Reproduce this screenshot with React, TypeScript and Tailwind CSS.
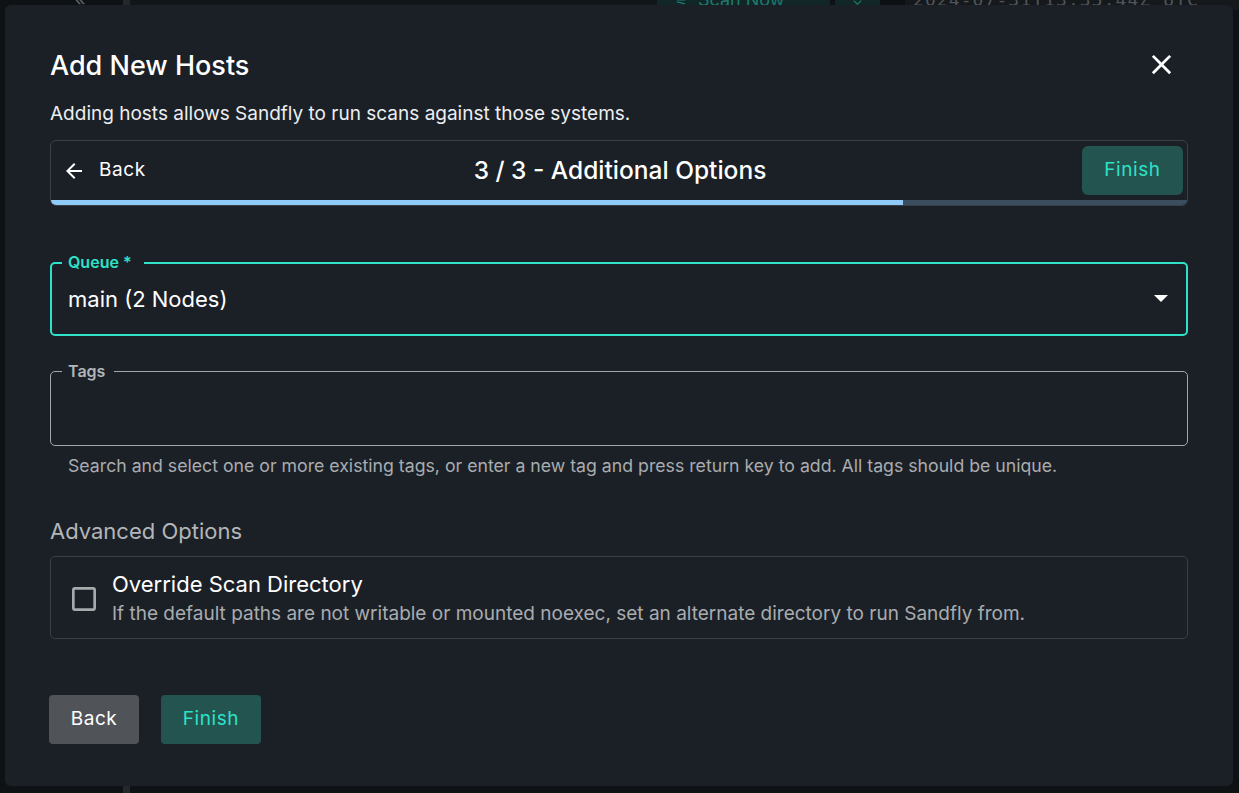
import React from "react";

const font = { fontFamily: "Inter, 'Noto Sans', sans-serif" };

function ArrowBack() {
  return (
    <svg width="24" height="24" viewBox="0 0 24 24" fill="#ffffff">
      <path d="M20 11H7.83l5.59-5.59L12 4l-8 8 8 8 1.41-1.41L7.83 13H20v-2z" />
    </svg>
  );
}

function CloseIcon() {
  return (
    <svg width="33" height="33" viewBox="0 0 24 24" fill="#ffffff">
      <path d="M19 6.41 17.59 5 12 10.59 6.41 5 5 6.41 10.59 12 5 17.59 6.41 19 12 13.41 17.59 19 19 17.59 13.41 12z" />
    </svg>
  );
}

function CheckboxBlank() {
  return (
    <svg width="32" height="32" viewBox="0 0 24 24" fill="#a7aaad">
      <path d="M19 5v14H5V5h14m0-2H5c-1.11 0-2 .9-2 2v14c0 1.1.89 2 2 2h14c1.1 0 2-.9 2-2V5c0-1.1-.9-2-2-2z" />
    </svg>
  );
}

export default function App() {
  return (
    <div style={font} className="relative w-full h-[793px] overflow-hidden bg-[#0e1215]">
      {/* Background application (dimmed) */}
      <div className="absolute inset-0">
        <div className="flex h-[22px] -mt-[12px] items-center">
          <div className="w-[123px] h-full flex items-center pl-[74px] text-[#5b6064] text-[20px]">«</div>
          <div className="w-[7px] h-full bg-[#24282c]" />
          <div className="w-[527px] h-full bg-[#111619]" />
          <div className="w-[173px] h-full bg-[#112627] flex items-center gap-[10px] pl-[18px] text-[#1f7a6d] text-[18px]">
            <span className="text-[14px]">⚟</span>
            <span>Scan Now</span>
          </div>
          <div className="w-[5px] h-full bg-[#0e1215]" />
          <div className="w-[45px] h-full bg-[#112627] flex items-center justify-center text-[#1f7a6d] text-[14px]">⌄</div>
          <div className="w-[25px] h-full bg-[#0c1012]" />
          <div className="flex-1 h-full bg-[#15191c] flex items-center pl-[8px] text-[#4f5458] text-[18px] tracking-[0.06em]" style={{ fontFamily: "'DejaVu Sans Mono', monospace" }}>
            2024-07-31T13:35:44Z UTC
          </div>
        </div>
        <div className="absolute left-[123px] top-0 w-[7px] h-full bg-[#24282c]" />
      </div>

      {/* Modal */}
      <div className="absolute left-[5px] top-[5px] w-[1228px] rounded-[6px] bg-[#1b2027] px-[45px] pt-[43px] pb-[42px]">
        <div className="flex items-center justify-between h-[36px]">
          <h2 className="text-[27px] leading-[36px] font-medium text-white">Add New Hosts</h2>
          <button className="w-[33px] h-[33px] -mt-[4px] mr-[10px] flex items-center justify-center">
            <CloseIcon />
          </button>
        </div>
        <p className="mt-[16px] text-[19px] leading-[28px] text-[#eceef0]">
          Adding hosts allows Sandfly to run scans against those systems.
        </p>

        {/* Stepper */}
        <div className="mt-[12px] border border-[#3a3f45] rounded-[6px] overflow-hidden">
          <div className="grid grid-cols-[1fr_auto_1fr] items-center pt-[5px] pl-[11px] pr-[4px]">
            <button className="flex items-center gap-[13px] text-white text-[19px] tracking-[0.03em] justify-self-start">
              <ArrowBack />
              <span>Back</span>
            </button>
            <div className="text-[24.5px] font-medium text-white -ml-[5px]">3 / 3 - Additional Options</div>
            <button className="justify-self-end h-[49px] w-[101px] rounded-[6px] bg-[#24544f] text-[#2de2c8] text-[19px] tracking-[0.03em]">
              Finish
            </button>
          </div>
          <div className="mt-[5px] h-[5px] bg-[#3a4e5f]">
            <div className="h-full w-[75%] bg-[#90caf9]" />
          </div>
        </div>

        {/* Queue */}
        <div className="relative mt-[56px] h-[74px] rounded-[5px] border-2 border-[#2de2c8] flex items-center justify-between pl-[16px] pr-[16px]">
          <span className="absolute left-[10px] -top-[11px] pl-[6px] pr-[12px] bg-[#1b2027] text-[16px] leading-[18px] font-semibold text-[#2de2c8]">
            Queue *
          </span>
          <span className="text-[22px] text-white">main (2 Nodes)</span>
          <svg width="14" height="7" viewBox="0 0 14 7" className="mr-[2px] -mt-[1px]">
            <polygon points="0,0 14,0 7,7" fill="#ffffff" />
          </svg>
        </div>

        {/* Tags */}
        <div className="relative mt-[35px] h-[75px] rounded-[5px] border border-[#a3a7ab]">
          <span className="absolute left-[11px] -top-[10px] pl-[6px] pr-[9px] bg-[#1b2027] text-[16px] leading-[18px] font-semibold text-[#b3b6b9]">
            Tags
          </span>
        </div>
        <p className="mt-[8px] pl-[18px] text-[17.7px] leading-[24px] text-[#a9acaf]">
          Search and select one or more existing tags, or enter a new tag and press return key to add. All tags should be unique.
        </p>

        <h3 className="mt-[39px] text-[22px] leading-[28px] text-[#b3b6b9]">Advanced Options</h3>

        <div className="mt-[11px] border border-[#3a3f45] rounded-[5px] flex items-center pl-[17px] pt-[13px] pb-[11px]">
          <CheckboxBlank />
          <div className="ml-[12px]">
            <div className="text-[22px] leading-[28px] text-white">Override Scan Directory</div>
            <div className="mt-[3px] text-[19px] leading-[26px] text-[#a9acaf]">
              If the default paths are not writable or mounted noexec, set an alternate directory to run Sandfly from.
            </div>
          </div>
        </div>

        <div className="mt-[56px] flex gap-[22px]">
          <button className="h-[49px] w-[90px] -ml-[1px] rounded-[4px] bg-[#505459] text-white text-[19px] tracking-[0.03em]">Back</button>
          <button className="h-[49px] w-[100px] rounded-[4px] bg-[#24544f] text-[#2de2c8] text-[19px] tracking-[0.03em]">Finish</button>
        </div>
      </div>
    </div>
  );
}
